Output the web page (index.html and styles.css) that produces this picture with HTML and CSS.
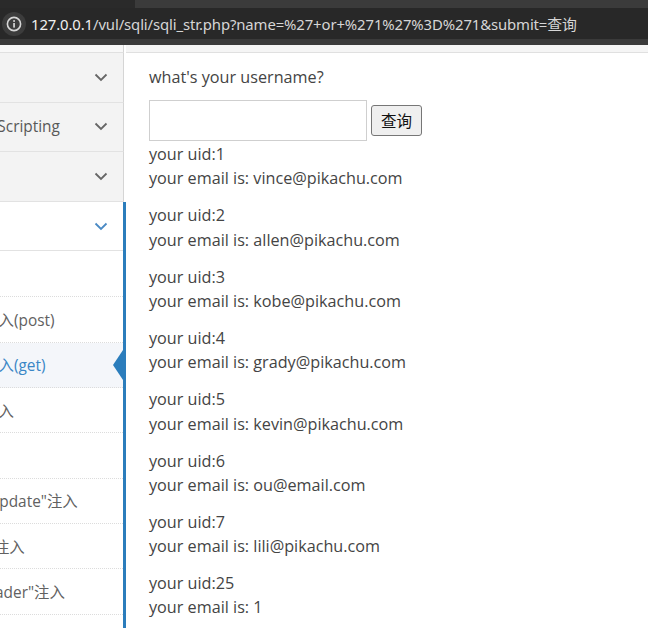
FILE: index.html
```html
<!DOCTYPE html>
<html lang="zh-CN">
<head>
<meta charset="utf-8">
<title>sqli_str</title>
<link rel="stylesheet" href="styles.css">
</head>
<body>
<div class="chrome">
  <div class="tabstrip"><div class="tab-dark"></div><div class="tab-light"></div></div>
  <div class="toolbar">
    <div class="omnibox">
      <span class="info">
        <svg width="16" height="16" viewBox="0 0 16 16"><circle cx="8" cy="8" r="6.6" fill="none" stroke="#d6d6d6" stroke-width="1.6"/><rect x="7.2" y="7" width="1.7" height="4.6" fill="#d6d6d6"/><circle cx="8.05" cy="5" r="1" fill="#d6d6d6"/></svg>
      </span>
      <span class="url"><span class="host">127.0.0.1</span>/vul/sqli/sqli_str.php?name=%27+or+%271%27%3D%271&amp;submit=查询</span>
    </div>
  </div>
</div>
<div class="page">
  <aside class="sidebar">
    <div class="sb-band"></div>
    <ul class="menu">
      <li class="item"><span class="label">暴力破解</span><svg class="chev" width="14" height="9" viewBox="0 0 14 9"><path d="M1.5 1.5 L7 7 L12.5 1.5" fill="none" stroke="#666" stroke-width="1.8"/></svg></li>
      <li class="item"><span class="label">Cross-Site Scripting</span><svg class="chev" width="14" height="9" viewBox="0 0 14 9"><path d="M1.5 1.5 L7 7 L12.5 1.5" fill="none" stroke="#666" stroke-width="1.8"/></svg></li>
      <li class="item"><span class="label">CSRF</span><svg class="chev" width="14" height="9" viewBox="0 0 14 9"><path d="M1.5 1.5 L7 7 L12.5 1.5" fill="none" stroke="#666" stroke-width="1.8"/></svg></li>
      <li class="group open">
        <div class="item item-open"><span class="label">SQL-Inject</span><svg class="chev" width="14" height="9" viewBox="0 0 14 9"><path d="M1.5 1.5 L7 7 L12.5 1.5" fill="none" stroke="#4a8ac4" stroke-width="1.8"/></svg></div>
        <ul class="sub">
          <li class="sub-item first"><span class="label">概述</span></li>
          <li class="sub-item"><span class="label">数字型注入(post)</span></li>
          <li class="sub-item active"><span class="label">字符型注入(get)</span><span class="arrow"></span></li>
          <li class="sub-item"><span class="label">搜索型注入</span></li>
          <li class="sub-item"><span class="label">xx型注入</span></li>
          <li class="sub-item"><span class="label">"insert/update"注入</span></li>
          <li class="sub-item"><span class="label">"delete"注入</span></li>
          <li class="sub-item"><span class="label">"http header"注入</span></li>
          <li class="sub-item"><span class="label">盲注(base on boolian)</span></li>
        </ul>
      </li>
    </ul>
  </aside>
  <main class="content">
    <div class="ct-band"></div>
    <div class="body">
      <p class="question">what's your username?</p>
      <form class="search">
        <input class="name" type="text" name="name">
        <button class="submit" type="button">查询</button>
      </form>
      <div class="result"><p>your uid:1</p><p>your email is: vince@pikachu.com</p></div>
      <div class="result"><p>your uid:2</p><p>your email is: allen@pikachu.com</p></div>
      <div class="result"><p>your uid:3</p><p>your email is: kobe@pikachu.com</p></div>
      <div class="result"><p>your uid:4</p><p>your email is: grady@pikachu.com</p></div>
      <div class="result"><p>your uid:5</p><p>your email is: kevin@pikachu.com</p></div>
      <div class="result"><p>your uid:6</p><p>your email is: ou@email.com</p></div>
      <div class="result"><p>your uid:7</p><p>your email is: lili@pikachu.com</p></div>
      <div class="result"><p>your uid:25</p><p>your email is: 1</p></div>
    </div>
  </main>
</div>
</body>
</html>
```
FILE: styles.css
```css
* { box-sizing: border-box; }
html, body { margin: 0; padding: 0; }
body {
  width: 648px;
  height: 628px;
  overflow: hidden;
  background: #fff;
  font-family: "Open Sans", "Noto Sans CJK SC", sans-serif;
}
ul { list-style: none; margin: 0; padding: 0; }
p { margin: 0; }

/* browser chrome */
.chrome { height: 45px; background: #3a3a3a; }
.tabstrip { display: flex; height: 8px; }
.tab-dark { width: 135px; background: #2a2a2a; }
.tab-light { flex: 1; background: #3b3b3b; }
.toolbar { height: 37px; background: #3a3a3a; padding: 0 0 6px 0; }
.omnibox {
  height: 31px;
  background: #282828;
  display: flex;
  align-items: center;
  margin-left: -14px;
}
.info {
  width: 24px; height: 24px;
  margin-left: 16px;
  border-radius: 50%;
  background: #3c3c3c;
  display: flex; align-items: center; justify-content: center;
}
.url {
  margin-left: 5px;
  font-family: "Noto Sans", "Noto Sans CJK SC", sans-serif;
  font-size: 14.9px;
  color: #d6d6d6;
  letter-spacing: -0.12px;
  white-space: nowrap;
}
.host { color: #f0f0f0; }

/* page */
.page { display: flex; height: 583px; }
.sidebar { width: 126px; flex: none; overflow: hidden; }
.sb-band { height: 8px; width: 124px; background: #f8f8f8; border-bottom: 1px solid #e0e0e0; border-right: 1px solid #d5d5d5; }
.menu { width: 124px; }
.item {
  height: 49.6px;
  display: flex;
  align-items: center;
  background: #f3f3f3;
  border-bottom: 1px solid #e2e2e2;
  border-right: 1px solid #d5d5d5;
  position: relative;
  white-space: nowrap;
  font-size: 15.4px;
  color: #585858;
}
.item .label { margin-left: -78px; }
.chev { position: absolute; left: 94px; top: 50%; margin-top: -4.5px; }
.group.open { width: 126px; border-right: 3px solid #2b7dbc; }
.item-open { background: #fff; border-right: none; }
.sub-item {
  height: 45.33px;
  display: flex;
  align-items: center;
  border-bottom: 1px dotted #dcdcdc;
  white-space: nowrap;
  font-size: 15.4px;
  color: #616161;
  background: #fff;
  position: relative;
}
.sub-item.first { height: 46px; }
.sub-item .label { margin-left: -63px; }
.sub-item.active { background: #f4f6fa; color: #3a86c6; }
.arrow {
  position: absolute;
  right: 0;
  top: 50%;
  margin-top: -15px;
  width: 0; height: 0;
  border-top: 15px solid transparent;
  border-bottom: 15px solid transparent;
  border-right: 10px solid #2b7dbc;
}

.content { flex: 1; min-width: 0; }
.ct-band { height: 8px; background: #f5f5f5; border-bottom: 1px solid #e0e0e0; }
.body {
  padding: 11.7px 0 0 23px;
  font-size: 16.2px;
  line-height: 24.2px;
  color: #444;
}
.question { margin-bottom: 11px; }
.search { display: flex; align-items: center; gap: 4px; margin-bottom: 1.3px; }
.name {
  width: 218px; height: 41px;
  border: 1px solid #cfcfcf;
  padding: 0; margin: 0;
  background: #fff;
}
.submit {
  width: 51px; height: 31px;
  margin: 0; padding: 0;
  font-family: "Noto Sans CJK SC", sans-serif;
  font-size: 15.5px;
  color: #111;
  background: #efefef;
  border: 1px solid #767676;
  border-radius: 3px;
}
.result { margin-bottom: 12.9px; }
```
